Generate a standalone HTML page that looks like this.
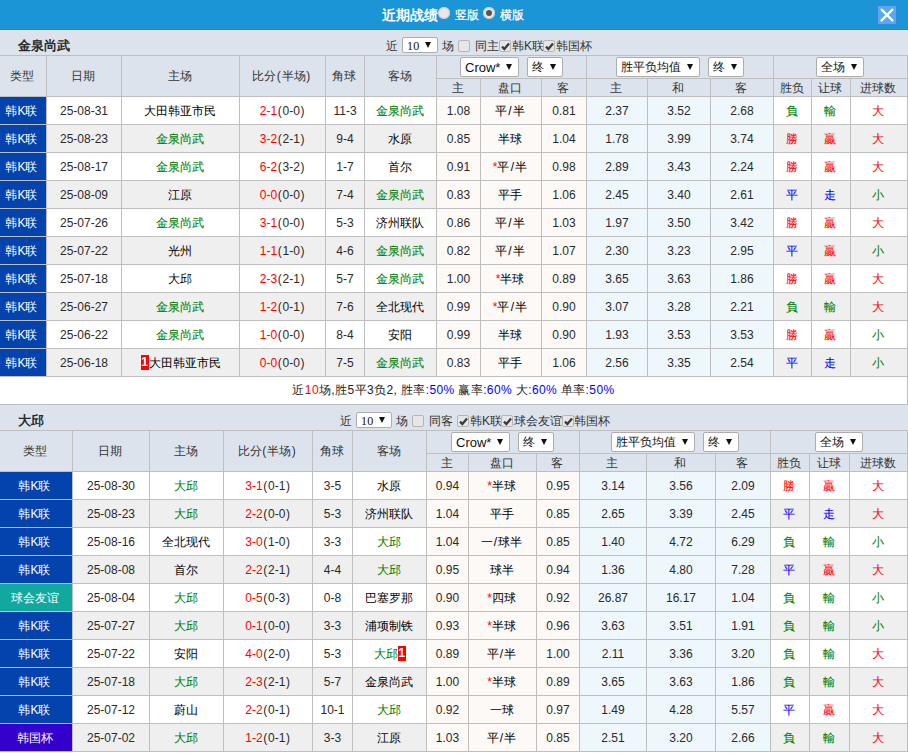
<!DOCTYPE html><html><head><meta charset="utf-8"><style>
*{margin:0;padding:0;box-sizing:content-box}
html,body{width:908px;height:753px;overflow:hidden;background:#dce3ec}
body{position:relative;font-family:"Liberation Sans",sans-serif;font-size:12px}
div{position:absolute}
.c{text-align:center;white-space:nowrap;overflow:hidden}
.t{white-space:nowrap}
.sel{background:#fff;border:1px solid #adadad;border-radius:2px;color:#111;white-space:nowrap}
.arr{position:absolute;top:6px;width:0;height:0;border-left:3.5px solid transparent;border-right:3.5px solid transparent;border-top:6px solid #111}
.cb{width:10px;height:10px;border:1px solid #b5b5b5;border-radius:2px;background:#e6e6e6}
.rad{width:12px;height:12px;border-radius:50%;background:#e8e8e8;box-shadow:inset 0 0 0 1px #c8c8c8}
.rad i{position:absolute;left:3px;top:3px;width:6px;height:6px;border-radius:50%;background:#555}
.p{padding:0 .7px}
.sl{padding:0 1.3px}
.bd{display:inline-block;width:8px;height:15px;line-height:15px;background:#f00;color:#fff;font-weight:bold;font-size:12px;text-align:center;vertical-align:1px}
</style></head><body><div style="left:0px;top:0px;width:908px;height:29px;background:#1b95d6"></div><div style="left:0px;top:29px;width:908px;height:1px;background:#0b8fd4"></div><div style="left:0px;top:30px;width:908px;height:1px;background:#e2e7ed"></div><div style="left:0px;top:31px;width:908px;height:722px;background:#dce3ec"></div><div class="t" style="left:382px;top:7px;font-size:14px;font-weight:bold;color:#fff;line-height:16px">近期战绩</div><div class="rad" style="left:438px;top:7px"></div><div class="t" style="left:455px;top:8px;color:#fff;line-height:14px;-webkit-text-stroke:0.25px #fff">竖版</div><div class="rad on" style="left:483px;top:7px"><i></i></div><div class="t" style="left:500px;top:8px;color:#fff;line-height:14px;-webkit-text-stroke:0.25px #fff">横版</div><div style="left:876px;top:4px;width:18px;height:18px;background:#5ba8ea;border:2px solid #2b8ae3"><svg width="18" height="18" viewBox="0 0 18 18" style="position:absolute;left:0;top:0"><path d="M3.6 3.6 L14.4 14.4 M14.4 3.6 L3.6 14.4" stroke="#fff" stroke-width="2.2" stroke-linecap="round"/></svg></div><div class="t" style="left:18px;top:38px;font-size:13px;font-weight:bold;color:#2a2a2a;line-height:15px">金泉尚武</div><div class="t" style="left:386px;top:39px;color:#333;line-height:14px">近</div><div class="sel" style="left:402px;top:37px;width:34px;height:14px;line-height:14px"><span style="position:absolute;left:4px;top:1px;font-size:12px"><span style="font-family:Liberation Serif,serif;letter-spacing:0.2px">10</span></span><span class="arr" style="left:22px;top:4px"></span></div><div class="t" style="left:442px;top:39px;color:#333;line-height:14px">场</div><div class="cb" style="left:458px;top:40px"></div><div class="t" style="left:475px;top:39px;color:#333;line-height:14px">同主</div><div class="cb" style="left:499px;top:40px"><svg width="11" height="11" viewBox="0 0 11 11" style="position:absolute;left:0;top:0"><path d="M2 5.6 L4.4 8 L9 2.6" stroke="#3a3a3a" stroke-width="2.3" fill="none"/></svg></div><div class="t" style="left:512px;top:39px;color:#333;line-height:14px">韩K联</div><div class="cb" style="left:543px;top:40px"><svg width="11" height="11" viewBox="0 0 11 11" style="position:absolute;left:0;top:0"><path d="M2 5.6 L4.4 8 L9 2.6" stroke="#3a3a3a" stroke-width="2.3" fill="none"/></svg></div><div class="t" style="left:556px;top:39px;color:#333;line-height:14px">韩国杯</div><div class="sel" style="left:460px;top:57px;width:57px;height:18px;line-height:18px"><span style="position:absolute;left:4px;top:1px;font-size:13px">Crow*</span><span class="arr" style="left:45px;top:6px"></span></div><div class="sel" style="left:527px;top:57px;width:34px;height:18px;line-height:18px"><span style="position:absolute;left:4px;top:0px;font-size:12px">终</span><span class="arr" style="left:22px;top:6px"></span></div><div class="sel" style="left:616px;top:57px;width:82px;height:18px;line-height:18px"><span style="position:absolute;left:4px;top:0px;font-size:12px">胜平负均值</span><span class="arr" style="left:70px;top:6px"></span></div><div class="sel" style="left:708px;top:57px;width:34px;height:18px;line-height:18px"><span style="position:absolute;left:4px;top:0px;font-size:12px">终</span><span class="arr" style="left:22px;top:6px"></span></div><div class="sel" style="left:816px;top:57px;width:46px;height:18px;line-height:18px"><span style="position:absolute;left:4px;top:0px;font-size:12px">全场</span><span class="arr" style="left:34px;top:6px"></span></div><div style="left:0px;top:97px;width:908px;height:27px;background:#ffffff"></div><div style="left:437px;top:97px;width:149px;height:27px;background:#fdf9f6"></div><div style="left:587px;top:97px;width:186px;height:27px;background:#eef7fc"></div><div style="left:0px;top:97px;width:46px;height:27px;background:#0443ae"></div><div style="left:0px;top:125px;width:908px;height:27px;background:#efefef"></div><div style="left:437px;top:125px;width:149px;height:27px;background:#fdf9f6"></div><div style="left:587px;top:125px;width:186px;height:27px;background:#eef7fc"></div><div style="left:0px;top:125px;width:46px;height:27px;background:#0443ae"></div><div style="left:0px;top:153px;width:908px;height:27px;background:#ffffff"></div><div style="left:437px;top:153px;width:149px;height:27px;background:#fdf9f6"></div><div style="left:587px;top:153px;width:186px;height:27px;background:#eef7fc"></div><div style="left:0px;top:153px;width:46px;height:27px;background:#0443ae"></div><div style="left:0px;top:181px;width:908px;height:27px;background:#efefef"></div><div style="left:437px;top:181px;width:149px;height:27px;background:#fdf9f6"></div><div style="left:587px;top:181px;width:186px;height:27px;background:#eef7fc"></div><div style="left:0px;top:181px;width:46px;height:27px;background:#0443ae"></div><div style="left:0px;top:209px;width:908px;height:27px;background:#ffffff"></div><div style="left:437px;top:209px;width:149px;height:27px;background:#fdf9f6"></div><div style="left:587px;top:209px;width:186px;height:27px;background:#eef7fc"></div><div style="left:0px;top:209px;width:46px;height:27px;background:#0443ae"></div><div style="left:0px;top:237px;width:908px;height:27px;background:#efefef"></div><div style="left:437px;top:237px;width:149px;height:27px;background:#fdf9f6"></div><div style="left:587px;top:237px;width:186px;height:27px;background:#eef7fc"></div><div style="left:0px;top:237px;width:46px;height:27px;background:#0443ae"></div><div style="left:0px;top:265px;width:908px;height:27px;background:#ffffff"></div><div style="left:437px;top:265px;width:149px;height:27px;background:#fdf9f6"></div><div style="left:587px;top:265px;width:186px;height:27px;background:#eef7fc"></div><div style="left:0px;top:265px;width:46px;height:27px;background:#0443ae"></div><div style="left:0px;top:293px;width:908px;height:27px;background:#efefef"></div><div style="left:437px;top:293px;width:149px;height:27px;background:#fdf9f6"></div><div style="left:587px;top:293px;width:186px;height:27px;background:#eef7fc"></div><div style="left:0px;top:293px;width:46px;height:27px;background:#0443ae"></div><div style="left:0px;top:321px;width:908px;height:27px;background:#ffffff"></div><div style="left:437px;top:321px;width:149px;height:27px;background:#fdf9f6"></div><div style="left:587px;top:321px;width:186px;height:27px;background:#eef7fc"></div><div style="left:0px;top:321px;width:46px;height:27px;background:#0443ae"></div><div style="left:0px;top:349px;width:908px;height:27px;background:#efefef"></div><div style="left:437px;top:349px;width:149px;height:27px;background:#fdf9f6"></div><div style="left:587px;top:349px;width:186px;height:27px;background:#eef7fc"></div><div style="left:0px;top:349px;width:46px;height:27px;background:#0443ae"></div><div style="left:0px;top:55px;width:907px;height:1px;background:#bebebe"></div><div style="left:436px;top:78px;width:471px;height:1px;background:#bebebe"></div><div style="left:0px;top:96px;width:907px;height:1px;background:#bebebe"></div><div style="left:0px;top:124px;width:907px;height:1px;background:#bebebe"></div><div style="left:0px;top:152px;width:907px;height:1px;background:#bebebe"></div><div style="left:0px;top:180px;width:907px;height:1px;background:#bebebe"></div><div style="left:0px;top:208px;width:907px;height:1px;background:#bebebe"></div><div style="left:0px;top:236px;width:907px;height:1px;background:#bebebe"></div><div style="left:0px;top:264px;width:907px;height:1px;background:#bebebe"></div><div style="left:0px;top:292px;width:907px;height:1px;background:#bebebe"></div><div style="left:0px;top:320px;width:907px;height:1px;background:#bebebe"></div><div style="left:0px;top:348px;width:907px;height:1px;background:#bebebe"></div><div style="left:0px;top:376px;width:907px;height:1px;background:#bebebe"></div><div style="left:46px;top:55px;width:1px;height:322px;background:#bebebe"></div><div style="left:121px;top:55px;width:1px;height:322px;background:#bebebe"></div><div style="left:239px;top:55px;width:1px;height:322px;background:#bebebe"></div><div style="left:325px;top:55px;width:1px;height:322px;background:#bebebe"></div><div style="left:364px;top:55px;width:1px;height:322px;background:#bebebe"></div><div style="left:436px;top:55px;width:1px;height:322px;background:#bebebe"></div><div style="left:480px;top:78px;width:1px;height:299px;background:#bebebe"></div><div style="left:541px;top:78px;width:1px;height:299px;background:#bebebe"></div><div style="left:586px;top:55px;width:1px;height:322px;background:#bebebe"></div><div style="left:647px;top:78px;width:1px;height:299px;background:#bebebe"></div><div style="left:710px;top:78px;width:1px;height:299px;background:#bebebe"></div><div style="left:773px;top:55px;width:1px;height:322px;background:#bebebe"></div><div style="left:811px;top:78px;width:1px;height:299px;background:#bebebe"></div><div style="left:850px;top:78px;width:1px;height:299px;background:#bebebe"></div><div style="left:907px;top:55px;width:1px;height:322px;background:#bebebe"></div><div class="c" style="left:-2px;top:56px;width:47px;height:40px;line-height:40px;color:#333">类型</div><div class="c" style="left:46px;top:56px;width:74px;height:40px;line-height:40px;color:#333">日期</div><div class="c" style="left:121px;top:56px;width:117px;height:40px;line-height:40px;color:#333">主场</div><div class="c" style="left:239px;top:56px;width:85px;height:40px;line-height:40px;color:#333">比分<span class="p">(</span>半场<span class="p">)</span></div><div class="c" style="left:325px;top:56px;width:38px;height:40px;line-height:40px;color:#333">角球</div><div class="c" style="left:364px;top:56px;width:71px;height:40px;line-height:40px;color:#333">客场</div><div class="c" style="left:436px;top:80px;width:43px;height:17px;line-height:17px;color:#333">主</div><div class="c" style="left:480px;top:80px;width:60px;height:17px;line-height:17px;color:#333">盘口</div><div class="c" style="left:541px;top:80px;width:44px;height:17px;line-height:17px;color:#333">客</div><div class="c" style="left:586px;top:80px;width:60px;height:17px;line-height:17px;color:#333">主</div><div class="c" style="left:647px;top:80px;width:62px;height:17px;line-height:17px;color:#333">和</div><div class="c" style="left:710px;top:80px;width:62px;height:17px;line-height:17px;color:#333">客</div><div class="c" style="left:773px;top:80px;width:37px;height:17px;line-height:17px;color:#333">胜负</div><div class="c" style="left:811px;top:80px;width:38px;height:17px;line-height:17px;color:#333">让球</div><div class="c" style="left:850px;top:80px;width:56px;height:17px;line-height:17px;color:#333">进球数</div><div class="c" style="left:-2px;top:98px;width:47px;height:27px;line-height:27px;color:#fff">韩K联</div><div class="c" style="left:47px;top:98px;width:74px;height:27px;line-height:27px;color:#2a2a2a">25-08-31</div><div class="c" style="left:121px;top:98px;width:117px;height:27px;line-height:27px;color:#000">大田韩亚市民</div><div class="c" style="left:240px;top:98px;width:85px;height:27px;line-height:27px;color:#2a2a2a"><span style="color:#ff0000">2-1</span><span class="p">(</span>0-0<span class="p">)</span></div><div class="c" style="left:326px;top:98px;width:38px;height:27px;line-height:27px;color:#2a2a2a">11-3</div><div class="c" style="left:364px;top:98px;width:71px;height:27px;line-height:27px;color:#008000;-webkit-text-stroke:0.08px">金泉尚武</div><div class="c" style="left:437px;top:98px;width:43px;height:27px;line-height:27px;color:#2a2a2a">1.08</div><div class="c" style="left:480px;top:98px;width:60px;height:27px;line-height:27px;color:#000">平<span class="sl">/</span>半</div><div class="c" style="left:542px;top:98px;width:44px;height:27px;line-height:27px;color:#2a2a2a">0.81</div><div class="c" style="left:587px;top:98px;width:60px;height:27px;line-height:27px;color:#2a2a2a">2.37</div><div class="c" style="left:648px;top:98px;width:62px;height:27px;line-height:27px;color:#2a2a2a">3.52</div><div class="c" style="left:711px;top:98px;width:62px;height:27px;line-height:27px;color:#2a2a2a">2.68</div><div class="c" style="left:773px;top:98px;width:37px;height:27px;line-height:27px;color:#008000;-webkit-text-stroke:0.08px">負</div><div class="c" style="left:811px;top:98px;width:38px;height:27px;line-height:27px;color:#008000;-webkit-text-stroke:0.08px">輸</div><div class="c" style="left:850px;top:98px;width:56px;height:27px;line-height:27px;color:#ff0000;-webkit-text-stroke:0.08px">大</div><div class="c" style="left:-2px;top:126px;width:47px;height:27px;line-height:27px;color:#fff">韩K联</div><div class="c" style="left:47px;top:126px;width:74px;height:27px;line-height:27px;color:#2a2a2a">25-08-23</div><div class="c" style="left:121px;top:126px;width:117px;height:27px;line-height:27px;color:#008000;-webkit-text-stroke:0.08px">金泉尚武</div><div class="c" style="left:240px;top:126px;width:85px;height:27px;line-height:27px;color:#2a2a2a"><span style="color:#ff0000">3-2</span><span class="p">(</span>2-1<span class="p">)</span></div><div class="c" style="left:326px;top:126px;width:38px;height:27px;line-height:27px;color:#2a2a2a">9-4</div><div class="c" style="left:364px;top:126px;width:71px;height:27px;line-height:27px;color:#000">水原</div><div class="c" style="left:437px;top:126px;width:43px;height:27px;line-height:27px;color:#2a2a2a">0.85</div><div class="c" style="left:480px;top:126px;width:60px;height:27px;line-height:27px;color:#000">半球</div><div class="c" style="left:542px;top:126px;width:44px;height:27px;line-height:27px;color:#2a2a2a">1.04</div><div class="c" style="left:587px;top:126px;width:60px;height:27px;line-height:27px;color:#2a2a2a">1.78</div><div class="c" style="left:648px;top:126px;width:62px;height:27px;line-height:27px;color:#2a2a2a">3.99</div><div class="c" style="left:711px;top:126px;width:62px;height:27px;line-height:27px;color:#2a2a2a">3.74</div><div class="c" style="left:773px;top:126px;width:37px;height:27px;line-height:27px;color:#ff0000;-webkit-text-stroke:0.08px">勝</div><div class="c" style="left:811px;top:126px;width:38px;height:27px;line-height:27px;color:#ff0000;-webkit-text-stroke:0.08px">贏</div><div class="c" style="left:850px;top:126px;width:56px;height:27px;line-height:27px;color:#ff0000;-webkit-text-stroke:0.08px">大</div><div class="c" style="left:-2px;top:154px;width:47px;height:27px;line-height:27px;color:#fff">韩K联</div><div class="c" style="left:47px;top:154px;width:74px;height:27px;line-height:27px;color:#2a2a2a">25-08-17</div><div class="c" style="left:121px;top:154px;width:117px;height:27px;line-height:27px;color:#008000;-webkit-text-stroke:0.08px">金泉尚武</div><div class="c" style="left:240px;top:154px;width:85px;height:27px;line-height:27px;color:#2a2a2a"><span style="color:#ff0000">6-2</span><span class="p">(</span>3-2<span class="p">)</span></div><div class="c" style="left:326px;top:154px;width:38px;height:27px;line-height:27px;color:#2a2a2a">1-7</div><div class="c" style="left:364px;top:154px;width:71px;height:27px;line-height:27px;color:#000">首尔</div><div class="c" style="left:437px;top:154px;width:43px;height:27px;line-height:27px;color:#2a2a2a">0.91</div><div class="c" style="left:480px;top:154px;width:60px;height:27px;line-height:27px;color:#000"><span style="color:#ff0000">*</span>平<span class="sl">/</span>半</div><div class="c" style="left:542px;top:154px;width:44px;height:27px;line-height:27px;color:#2a2a2a">0.98</div><div class="c" style="left:587px;top:154px;width:60px;height:27px;line-height:27px;color:#2a2a2a">2.89</div><div class="c" style="left:648px;top:154px;width:62px;height:27px;line-height:27px;color:#2a2a2a">3.43</div><div class="c" style="left:711px;top:154px;width:62px;height:27px;line-height:27px;color:#2a2a2a">2.24</div><div class="c" style="left:773px;top:154px;width:37px;height:27px;line-height:27px;color:#ff0000;-webkit-text-stroke:0.08px">勝</div><div class="c" style="left:811px;top:154px;width:38px;height:27px;line-height:27px;color:#ff0000;-webkit-text-stroke:0.08px">贏</div><div class="c" style="left:850px;top:154px;width:56px;height:27px;line-height:27px;color:#ff0000;-webkit-text-stroke:0.08px">大</div><div class="c" style="left:-2px;top:182px;width:47px;height:27px;line-height:27px;color:#fff">韩K联</div><div class="c" style="left:47px;top:182px;width:74px;height:27px;line-height:27px;color:#2a2a2a">25-08-09</div><div class="c" style="left:121px;top:182px;width:117px;height:27px;line-height:27px;color:#000">江原</div><div class="c" style="left:240px;top:182px;width:85px;height:27px;line-height:27px;color:#2a2a2a"><span style="color:#ff0000">0-0</span><span class="p">(</span>0-0<span class="p">)</span></div><div class="c" style="left:326px;top:182px;width:38px;height:27px;line-height:27px;color:#2a2a2a">7-4</div><div class="c" style="left:364px;top:182px;width:71px;height:27px;line-height:27px;color:#008000;-webkit-text-stroke:0.08px">金泉尚武</div><div class="c" style="left:437px;top:182px;width:43px;height:27px;line-height:27px;color:#2a2a2a">0.83</div><div class="c" style="left:480px;top:182px;width:60px;height:27px;line-height:27px;color:#000">平手</div><div class="c" style="left:542px;top:182px;width:44px;height:27px;line-height:27px;color:#2a2a2a">1.06</div><div class="c" style="left:587px;top:182px;width:60px;height:27px;line-height:27px;color:#2a2a2a">2.45</div><div class="c" style="left:648px;top:182px;width:62px;height:27px;line-height:27px;color:#2a2a2a">3.40</div><div class="c" style="left:711px;top:182px;width:62px;height:27px;line-height:27px;color:#2a2a2a">2.61</div><div class="c" style="left:773px;top:182px;width:37px;height:27px;line-height:27px;color:#0000ff;-webkit-text-stroke:0.08px">平</div><div class="c" style="left:811px;top:182px;width:38px;height:27px;line-height:27px;color:#0000ff;-webkit-text-stroke:0.08px">走</div><div class="c" style="left:850px;top:182px;width:56px;height:27px;line-height:27px;color:#008000;-webkit-text-stroke:0.08px">小</div><div class="c" style="left:-2px;top:210px;width:47px;height:27px;line-height:27px;color:#fff">韩K联</div><div class="c" style="left:47px;top:210px;width:74px;height:27px;line-height:27px;color:#2a2a2a">25-07-26</div><div class="c" style="left:121px;top:210px;width:117px;height:27px;line-height:27px;color:#008000;-webkit-text-stroke:0.08px">金泉尚武</div><div class="c" style="left:240px;top:210px;width:85px;height:27px;line-height:27px;color:#2a2a2a"><span style="color:#ff0000">3-1</span><span class="p">(</span>0-0<span class="p">)</span></div><div class="c" style="left:326px;top:210px;width:38px;height:27px;line-height:27px;color:#2a2a2a">5-3</div><div class="c" style="left:364px;top:210px;width:71px;height:27px;line-height:27px;color:#000">济州联队</div><div class="c" style="left:437px;top:210px;width:43px;height:27px;line-height:27px;color:#2a2a2a">0.86</div><div class="c" style="left:480px;top:210px;width:60px;height:27px;line-height:27px;color:#000">平<span class="sl">/</span>半</div><div class="c" style="left:542px;top:210px;width:44px;height:27px;line-height:27px;color:#2a2a2a">1.03</div><div class="c" style="left:587px;top:210px;width:60px;height:27px;line-height:27px;color:#2a2a2a">1.97</div><div class="c" style="left:648px;top:210px;width:62px;height:27px;line-height:27px;color:#2a2a2a">3.50</div><div class="c" style="left:711px;top:210px;width:62px;height:27px;line-height:27px;color:#2a2a2a">3.42</div><div class="c" style="left:773px;top:210px;width:37px;height:27px;line-height:27px;color:#ff0000;-webkit-text-stroke:0.08px">勝</div><div class="c" style="left:811px;top:210px;width:38px;height:27px;line-height:27px;color:#ff0000;-webkit-text-stroke:0.08px">贏</div><div class="c" style="left:850px;top:210px;width:56px;height:27px;line-height:27px;color:#ff0000;-webkit-text-stroke:0.08px">大</div><div class="c" style="left:-2px;top:238px;width:47px;height:27px;line-height:27px;color:#fff">韩K联</div><div class="c" style="left:47px;top:238px;width:74px;height:27px;line-height:27px;color:#2a2a2a">25-07-22</div><div class="c" style="left:121px;top:238px;width:117px;height:27px;line-height:27px;color:#000">光州</div><div class="c" style="left:240px;top:238px;width:85px;height:27px;line-height:27px;color:#2a2a2a"><span style="color:#ff0000">1-1</span><span class="p">(</span>1-0<span class="p">)</span></div><div class="c" style="left:326px;top:238px;width:38px;height:27px;line-height:27px;color:#2a2a2a">4-6</div><div class="c" style="left:364px;top:238px;width:71px;height:27px;line-height:27px;color:#008000;-webkit-text-stroke:0.08px">金泉尚武</div><div class="c" style="left:437px;top:238px;width:43px;height:27px;line-height:27px;color:#2a2a2a">0.82</div><div class="c" style="left:480px;top:238px;width:60px;height:27px;line-height:27px;color:#000">平<span class="sl">/</span>半</div><div class="c" style="left:542px;top:238px;width:44px;height:27px;line-height:27px;color:#2a2a2a">1.07</div><div class="c" style="left:587px;top:238px;width:60px;height:27px;line-height:27px;color:#2a2a2a">2.30</div><div class="c" style="left:648px;top:238px;width:62px;height:27px;line-height:27px;color:#2a2a2a">3.23</div><div class="c" style="left:711px;top:238px;width:62px;height:27px;line-height:27px;color:#2a2a2a">2.95</div><div class="c" style="left:773px;top:238px;width:37px;height:27px;line-height:27px;color:#0000ff;-webkit-text-stroke:0.08px">平</div><div class="c" style="left:811px;top:238px;width:38px;height:27px;line-height:27px;color:#ff0000;-webkit-text-stroke:0.08px">贏</div><div class="c" style="left:850px;top:238px;width:56px;height:27px;line-height:27px;color:#008000;-webkit-text-stroke:0.08px">小</div><div class="c" style="left:-2px;top:266px;width:47px;height:27px;line-height:27px;color:#fff">韩K联</div><div class="c" style="left:47px;top:266px;width:74px;height:27px;line-height:27px;color:#2a2a2a">25-07-18</div><div class="c" style="left:121px;top:266px;width:117px;height:27px;line-height:27px;color:#000">大邱</div><div class="c" style="left:240px;top:266px;width:85px;height:27px;line-height:27px;color:#2a2a2a"><span style="color:#ff0000">2-3</span><span class="p">(</span>2-1<span class="p">)</span></div><div class="c" style="left:326px;top:266px;width:38px;height:27px;line-height:27px;color:#2a2a2a">5-7</div><div class="c" style="left:364px;top:266px;width:71px;height:27px;line-height:27px;color:#008000;-webkit-text-stroke:0.08px">金泉尚武</div><div class="c" style="left:437px;top:266px;width:43px;height:27px;line-height:27px;color:#2a2a2a">1.00</div><div class="c" style="left:480px;top:266px;width:60px;height:27px;line-height:27px;color:#000"><span style="color:#ff0000">*</span>半球</div><div class="c" style="left:542px;top:266px;width:44px;height:27px;line-height:27px;color:#2a2a2a">0.89</div><div class="c" style="left:587px;top:266px;width:60px;height:27px;line-height:27px;color:#2a2a2a">3.65</div><div class="c" style="left:648px;top:266px;width:62px;height:27px;line-height:27px;color:#2a2a2a">3.63</div><div class="c" style="left:711px;top:266px;width:62px;height:27px;line-height:27px;color:#2a2a2a">1.86</div><div class="c" style="left:773px;top:266px;width:37px;height:27px;line-height:27px;color:#ff0000;-webkit-text-stroke:0.08px">勝</div><div class="c" style="left:811px;top:266px;width:38px;height:27px;line-height:27px;color:#ff0000;-webkit-text-stroke:0.08px">贏</div><div class="c" style="left:850px;top:266px;width:56px;height:27px;line-height:27px;color:#ff0000;-webkit-text-stroke:0.08px">大</div><div class="c" style="left:-2px;top:294px;width:47px;height:27px;line-height:27px;color:#fff">韩K联</div><div class="c" style="left:47px;top:294px;width:74px;height:27px;line-height:27px;color:#2a2a2a">25-06-27</div><div class="c" style="left:121px;top:294px;width:117px;height:27px;line-height:27px;color:#008000;-webkit-text-stroke:0.08px">金泉尚武</div><div class="c" style="left:240px;top:294px;width:85px;height:27px;line-height:27px;color:#2a2a2a"><span style="color:#ff0000">1-2</span><span class="p">(</span>0-1<span class="p">)</span></div><div class="c" style="left:326px;top:294px;width:38px;height:27px;line-height:27px;color:#2a2a2a">7-6</div><div class="c" style="left:364px;top:294px;width:71px;height:27px;line-height:27px;color:#000">全北现代</div><div class="c" style="left:437px;top:294px;width:43px;height:27px;line-height:27px;color:#2a2a2a">0.99</div><div class="c" style="left:480px;top:294px;width:60px;height:27px;line-height:27px;color:#000"><span style="color:#ff0000">*</span>平<span class="sl">/</span>半</div><div class="c" style="left:542px;top:294px;width:44px;height:27px;line-height:27px;color:#2a2a2a">0.90</div><div class="c" style="left:587px;top:294px;width:60px;height:27px;line-height:27px;color:#2a2a2a">3.07</div><div class="c" style="left:648px;top:294px;width:62px;height:27px;line-height:27px;color:#2a2a2a">3.28</div><div class="c" style="left:711px;top:294px;width:62px;height:27px;line-height:27px;color:#2a2a2a">2.21</div><div class="c" style="left:773px;top:294px;width:37px;height:27px;line-height:27px;color:#008000;-webkit-text-stroke:0.08px">負</div><div class="c" style="left:811px;top:294px;width:38px;height:27px;line-height:27px;color:#008000;-webkit-text-stroke:0.08px">輸</div><div class="c" style="left:850px;top:294px;width:56px;height:27px;line-height:27px;color:#ff0000;-webkit-text-stroke:0.08px">大</div><div class="c" style="left:-2px;top:322px;width:47px;height:27px;line-height:27px;color:#fff">韩K联</div><div class="c" style="left:47px;top:322px;width:74px;height:27px;line-height:27px;color:#2a2a2a">25-06-22</div><div class="c" style="left:121px;top:322px;width:117px;height:27px;line-height:27px;color:#008000;-webkit-text-stroke:0.08px">金泉尚武</div><div class="c" style="left:240px;top:322px;width:85px;height:27px;line-height:27px;color:#2a2a2a"><span style="color:#ff0000">1-0</span><span class="p">(</span>0-0<span class="p">)</span></div><div class="c" style="left:326px;top:322px;width:38px;height:27px;line-height:27px;color:#2a2a2a">8-4</div><div class="c" style="left:364px;top:322px;width:71px;height:27px;line-height:27px;color:#000">安阳</div><div class="c" style="left:437px;top:322px;width:43px;height:27px;line-height:27px;color:#2a2a2a">0.99</div><div class="c" style="left:480px;top:322px;width:60px;height:27px;line-height:27px;color:#000">半球</div><div class="c" style="left:542px;top:322px;width:44px;height:27px;line-height:27px;color:#2a2a2a">0.90</div><div class="c" style="left:587px;top:322px;width:60px;height:27px;line-height:27px;color:#2a2a2a">1.93</div><div class="c" style="left:648px;top:322px;width:62px;height:27px;line-height:27px;color:#2a2a2a">3.53</div><div class="c" style="left:711px;top:322px;width:62px;height:27px;line-height:27px;color:#2a2a2a">3.53</div><div class="c" style="left:773px;top:322px;width:37px;height:27px;line-height:27px;color:#ff0000;-webkit-text-stroke:0.08px">勝</div><div class="c" style="left:811px;top:322px;width:38px;height:27px;line-height:27px;color:#ff0000;-webkit-text-stroke:0.08px">贏</div><div class="c" style="left:850px;top:322px;width:56px;height:27px;line-height:27px;color:#008000;-webkit-text-stroke:0.08px">小</div><div class="c" style="left:-2px;top:350px;width:47px;height:27px;line-height:27px;color:#fff">韩K联</div><div class="c" style="left:47px;top:350px;width:74px;height:27px;line-height:27px;color:#2a2a2a">25-06-18</div><div class="c" style="left:122px;top:350px;width:117px;height:27px;line-height:27px;color:#000"><b class="bd">1</b>大田韩亚市民</div><div class="c" style="left:240px;top:350px;width:85px;height:27px;line-height:27px;color:#2a2a2a"><span style="color:#ff0000">0-0</span><span class="p">(</span>0-0<span class="p">)</span></div><div class="c" style="left:326px;top:350px;width:38px;height:27px;line-height:27px;color:#2a2a2a">7-5</div><div class="c" style="left:364px;top:350px;width:71px;height:27px;line-height:27px;color:#008000;-webkit-text-stroke:0.08px">金泉尚武</div><div class="c" style="left:437px;top:350px;width:43px;height:27px;line-height:27px;color:#2a2a2a">0.83</div><div class="c" style="left:480px;top:350px;width:60px;height:27px;line-height:27px;color:#000">平手</div><div class="c" style="left:542px;top:350px;width:44px;height:27px;line-height:27px;color:#2a2a2a">1.06</div><div class="c" style="left:587px;top:350px;width:60px;height:27px;line-height:27px;color:#2a2a2a">2.56</div><div class="c" style="left:648px;top:350px;width:62px;height:27px;line-height:27px;color:#2a2a2a">3.35</div><div class="c" style="left:711px;top:350px;width:62px;height:27px;line-height:27px;color:#2a2a2a">2.54</div><div class="c" style="left:773px;top:350px;width:37px;height:27px;line-height:27px;color:#0000ff;-webkit-text-stroke:0.08px">平</div><div class="c" style="left:811px;top:350px;width:38px;height:27px;line-height:27px;color:#0000ff;-webkit-text-stroke:0.08px">走</div><div class="c" style="left:850px;top:350px;width:56px;height:27px;line-height:27px;color:#008000;-webkit-text-stroke:0.08px">小</div><div style="left:0px;top:377px;width:907px;height:27px;background:#fff"></div><div style="left:0px;top:404px;width:907px;height:1px;background:#bebebe"></div><div style="left:907px;top:376px;width:1px;height:29px;background:#bebebe"></div><div class="c" style="left:0px;top:377px;width:907px;height:27px;line-height:27px;color:#222;letter-spacing:0.39px">近<span style="color:#ff0000">10</span>场,胜5平3负2, 胜率:<span style="color:#0000ff">50%</span> 赢率:<span style="color:#0000ff">60%</span> 大:<span style="color:#0000ff">60%</span> 单率:<span style="color:#0000ff">50%</span></div><div class="t" style="left:18px;top:413px;font-size:13px;font-weight:bold;color:#2a2a2a;line-height:15px">大邱</div><div class="t" style="left:340px;top:414px;color:#333;line-height:14px">近</div><div class="sel" style="left:356px;top:412px;width:34px;height:14px;line-height:14px"><span style="position:absolute;left:4px;top:1px;font-size:12px"><span style="font-family:Liberation Serif,serif;letter-spacing:0.2px">10</span></span><span class="arr" style="left:22px;top:4px"></span></div><div class="t" style="left:396px;top:414px;color:#333;line-height:14px">场</div><div class="cb" style="left:412px;top:415px"></div><div class="t" style="left:429px;top:414px;color:#333;line-height:14px">同客</div><div class="cb" style="left:457px;top:415px"><svg width="11" height="11" viewBox="0 0 11 11" style="position:absolute;left:0;top:0"><path d="M2 5.6 L4.4 8 L9 2.6" stroke="#3a3a3a" stroke-width="2.3" fill="none"/></svg></div><div class="t" style="left:470px;top:414px;color:#333;line-height:14px">韩K联</div><div class="cb" style="left:501px;top:415px"><svg width="11" height="11" viewBox="0 0 11 11" style="position:absolute;left:0;top:0"><path d="M2 5.6 L4.4 8 L9 2.6" stroke="#3a3a3a" stroke-width="2.3" fill="none"/></svg></div><div class="t" style="left:514px;top:414px;color:#333;line-height:14px">球会友谊</div><div class="cb" style="left:562px;top:415px"><svg width="11" height="11" viewBox="0 0 11 11" style="position:absolute;left:0;top:0"><path d="M2 5.6 L4.4 8 L9 2.6" stroke="#3a3a3a" stroke-width="2.3" fill="none"/></svg></div><div class="t" style="left:574px;top:414px;color:#333;line-height:14px">韩国杯</div><div class="sel" style="left:451px;top:432px;width:57px;height:18px;line-height:18px"><span style="position:absolute;left:4px;top:1px;font-size:13px">Crow*</span><span class="arr" style="left:45px;top:6px"></span></div><div class="sel" style="left:518px;top:432px;width:34px;height:18px;line-height:18px"><span style="position:absolute;left:4px;top:0px;font-size:12px">终</span><span class="arr" style="left:22px;top:6px"></span></div><div class="sel" style="left:611px;top:432px;width:82px;height:18px;line-height:18px"><span style="position:absolute;left:4px;top:0px;font-size:12px">胜平负均值</span><span class="arr" style="left:70px;top:6px"></span></div><div class="sel" style="left:703px;top:432px;width:34px;height:18px;line-height:18px"><span style="position:absolute;left:4px;top:0px;font-size:12px">终</span><span class="arr" style="left:22px;top:6px"></span></div><div class="sel" style="left:815px;top:432px;width:46px;height:18px;line-height:18px"><span style="position:absolute;left:4px;top:0px;font-size:12px">全场</span><span class="arr" style="left:34px;top:6px"></span></div><div style="left:0px;top:472px;width:908px;height:27px;background:#ffffff"></div><div style="left:427px;top:472px;width:152px;height:27px;background:#fdf9f6"></div><div style="left:580px;top:472px;width:190px;height:27px;background:#eef7fc"></div><div style="left:0px;top:472px;width:72px;height:27px;background:#0443ae"></div><div style="left:0px;top:500px;width:908px;height:27px;background:#efefef"></div><div style="left:427px;top:500px;width:152px;height:27px;background:#fdf9f6"></div><div style="left:580px;top:500px;width:190px;height:27px;background:#eef7fc"></div><div style="left:0px;top:500px;width:72px;height:27px;background:#0443ae"></div><div style="left:0px;top:528px;width:908px;height:27px;background:#ffffff"></div><div style="left:427px;top:528px;width:152px;height:27px;background:#fdf9f6"></div><div style="left:580px;top:528px;width:190px;height:27px;background:#eef7fc"></div><div style="left:0px;top:528px;width:72px;height:27px;background:#0443ae"></div><div style="left:0px;top:556px;width:908px;height:27px;background:#efefef"></div><div style="left:427px;top:556px;width:152px;height:27px;background:#fdf9f6"></div><div style="left:580px;top:556px;width:190px;height:27px;background:#eef7fc"></div><div style="left:0px;top:556px;width:72px;height:27px;background:#0443ae"></div><div style="left:0px;top:584px;width:908px;height:27px;background:#ffffff"></div><div style="left:427px;top:584px;width:152px;height:27px;background:#fdf9f6"></div><div style="left:580px;top:584px;width:190px;height:27px;background:#eef7fc"></div><div style="left:0px;top:584px;width:72px;height:27px;background:#11a8a0"></div><div style="left:0px;top:612px;width:908px;height:27px;background:#efefef"></div><div style="left:427px;top:612px;width:152px;height:27px;background:#fdf9f6"></div><div style="left:580px;top:612px;width:190px;height:27px;background:#eef7fc"></div><div style="left:0px;top:612px;width:72px;height:27px;background:#0443ae"></div><div style="left:0px;top:640px;width:908px;height:27px;background:#ffffff"></div><div style="left:427px;top:640px;width:152px;height:27px;background:#fdf9f6"></div><div style="left:580px;top:640px;width:190px;height:27px;background:#eef7fc"></div><div style="left:0px;top:640px;width:72px;height:27px;background:#0443ae"></div><div style="left:0px;top:668px;width:908px;height:27px;background:#efefef"></div><div style="left:427px;top:668px;width:152px;height:27px;background:#fdf9f6"></div><div style="left:580px;top:668px;width:190px;height:27px;background:#eef7fc"></div><div style="left:0px;top:668px;width:72px;height:27px;background:#0443ae"></div><div style="left:0px;top:696px;width:908px;height:27px;background:#ffffff"></div><div style="left:427px;top:696px;width:152px;height:27px;background:#fdf9f6"></div><div style="left:580px;top:696px;width:190px;height:27px;background:#eef7fc"></div><div style="left:0px;top:696px;width:72px;height:27px;background:#0443ae"></div><div style="left:0px;top:724px;width:908px;height:27px;background:#efefef"></div><div style="left:427px;top:724px;width:152px;height:27px;background:#fdf9f6"></div><div style="left:580px;top:724px;width:190px;height:27px;background:#eef7fc"></div><div style="left:0px;top:724px;width:72px;height:27px;background:#3300cc"></div><div style="left:0px;top:430px;width:907px;height:1px;background:#bebebe"></div><div style="left:426px;top:453px;width:481px;height:1px;background:#bebebe"></div><div style="left:0px;top:471px;width:907px;height:1px;background:#bebebe"></div><div style="left:0px;top:499px;width:907px;height:1px;background:#bebebe"></div><div style="left:0px;top:527px;width:907px;height:1px;background:#bebebe"></div><div style="left:0px;top:555px;width:907px;height:1px;background:#bebebe"></div><div style="left:0px;top:583px;width:907px;height:1px;background:#bebebe"></div><div style="left:0px;top:611px;width:907px;height:1px;background:#bebebe"></div><div style="left:0px;top:639px;width:907px;height:1px;background:#bebebe"></div><div style="left:0px;top:667px;width:907px;height:1px;background:#bebebe"></div><div style="left:0px;top:695px;width:907px;height:1px;background:#bebebe"></div><div style="left:0px;top:723px;width:907px;height:1px;background:#bebebe"></div><div style="left:0px;top:751px;width:907px;height:1px;background:#bebebe"></div><div style="left:72px;top:430px;width:1px;height:322px;background:#bebebe"></div><div style="left:149px;top:430px;width:1px;height:322px;background:#bebebe"></div><div style="left:223px;top:430px;width:1px;height:322px;background:#bebebe"></div><div style="left:312px;top:430px;width:1px;height:322px;background:#bebebe"></div><div style="left:352px;top:430px;width:1px;height:322px;background:#bebebe"></div><div style="left:426px;top:430px;width:1px;height:322px;background:#bebebe"></div><div style="left:468px;top:453px;width:1px;height:299px;background:#bebebe"></div><div style="left:536px;top:453px;width:1px;height:299px;background:#bebebe"></div><div style="left:579px;top:430px;width:1px;height:322px;background:#bebebe"></div><div style="left:646px;top:453px;width:1px;height:299px;background:#bebebe"></div><div style="left:715px;top:453px;width:1px;height:299px;background:#bebebe"></div><div style="left:770px;top:430px;width:1px;height:322px;background:#bebebe"></div><div style="left:809px;top:453px;width:1px;height:299px;background:#bebebe"></div><div style="left:849px;top:453px;width:1px;height:299px;background:#bebebe"></div><div style="left:907px;top:430px;width:1px;height:322px;background:#bebebe"></div><div class="c" style="left:-2px;top:431px;width:73px;height:40px;line-height:40px;color:#333">类型</div><div class="c" style="left:72px;top:431px;width:76px;height:40px;line-height:40px;color:#333">日期</div><div class="c" style="left:149px;top:431px;width:73px;height:40px;line-height:40px;color:#333">主场</div><div class="c" style="left:223px;top:431px;width:88px;height:40px;line-height:40px;color:#333">比分<span class="p">(</span>半场<span class="p">)</span></div><div class="c" style="left:312px;top:431px;width:39px;height:40px;line-height:40px;color:#333">角球</div><div class="c" style="left:352px;top:431px;width:73px;height:40px;line-height:40px;color:#333">客场</div><div class="c" style="left:426px;top:455px;width:41px;height:17px;line-height:17px;color:#333">主</div><div class="c" style="left:468px;top:455px;width:67px;height:17px;line-height:17px;color:#333">盘口</div><div class="c" style="left:536px;top:455px;width:42px;height:17px;line-height:17px;color:#333">客</div><div class="c" style="left:579px;top:455px;width:66px;height:17px;line-height:17px;color:#333">主</div><div class="c" style="left:646px;top:455px;width:68px;height:17px;line-height:17px;color:#333">和</div><div class="c" style="left:715px;top:455px;width:54px;height:17px;line-height:17px;color:#333">客</div><div class="c" style="left:770px;top:455px;width:38px;height:17px;line-height:17px;color:#333">胜负</div><div class="c" style="left:809px;top:455px;width:39px;height:17px;line-height:17px;color:#333">让球</div><div class="c" style="left:849px;top:455px;width:57px;height:17px;line-height:17px;color:#333">进球数</div><div class="c" style="left:-2px;top:473px;width:73px;height:27px;line-height:27px;color:#fff">韩K联</div><div class="c" style="left:73px;top:473px;width:76px;height:27px;line-height:27px;color:#2a2a2a">25-08-30</div><div class="c" style="left:149px;top:473px;width:73px;height:27px;line-height:27px;color:#008000;-webkit-text-stroke:0.08px">大邱</div><div class="c" style="left:224px;top:473px;width:88px;height:27px;line-height:27px;color:#2a2a2a"><span style="color:#ff0000">3-1</span><span class="p">(</span>0-1<span class="p">)</span></div><div class="c" style="left:313px;top:473px;width:39px;height:27px;line-height:27px;color:#2a2a2a">3-5</div><div class="c" style="left:352px;top:473px;width:73px;height:27px;line-height:27px;color:#000">水原</div><div class="c" style="left:427px;top:473px;width:41px;height:27px;line-height:27px;color:#2a2a2a">0.94</div><div class="c" style="left:468px;top:473px;width:67px;height:27px;line-height:27px;color:#000"><span style="color:#ff0000">*</span>半球</div><div class="c" style="left:537px;top:473px;width:42px;height:27px;line-height:27px;color:#2a2a2a">0.95</div><div class="c" style="left:580px;top:473px;width:66px;height:27px;line-height:27px;color:#2a2a2a">3.14</div><div class="c" style="left:647px;top:473px;width:68px;height:27px;line-height:27px;color:#2a2a2a">3.56</div><div class="c" style="left:716px;top:473px;width:54px;height:27px;line-height:27px;color:#2a2a2a">2.09</div><div class="c" style="left:770px;top:473px;width:38px;height:27px;line-height:27px;color:#ff0000;-webkit-text-stroke:0.08px">勝</div><div class="c" style="left:809px;top:473px;width:39px;height:27px;line-height:27px;color:#ff0000;-webkit-text-stroke:0.08px">贏</div><div class="c" style="left:849px;top:473px;width:57px;height:27px;line-height:27px;color:#ff0000;-webkit-text-stroke:0.08px">大</div><div class="c" style="left:-2px;top:501px;width:73px;height:27px;line-height:27px;color:#fff">韩K联</div><div class="c" style="left:73px;top:501px;width:76px;height:27px;line-height:27px;color:#2a2a2a">25-08-23</div><div class="c" style="left:149px;top:501px;width:73px;height:27px;line-height:27px;color:#008000;-webkit-text-stroke:0.08px">大邱</div><div class="c" style="left:224px;top:501px;width:88px;height:27px;line-height:27px;color:#2a2a2a"><span style="color:#ff0000">2-2</span><span class="p">(</span>0-0<span class="p">)</span></div><div class="c" style="left:313px;top:501px;width:39px;height:27px;line-height:27px;color:#2a2a2a">5-3</div><div class="c" style="left:352px;top:501px;width:73px;height:27px;line-height:27px;color:#000">济州联队</div><div class="c" style="left:427px;top:501px;width:41px;height:27px;line-height:27px;color:#2a2a2a">1.04</div><div class="c" style="left:468px;top:501px;width:67px;height:27px;line-height:27px;color:#000">平手</div><div class="c" style="left:537px;top:501px;width:42px;height:27px;line-height:27px;color:#2a2a2a">0.85</div><div class="c" style="left:580px;top:501px;width:66px;height:27px;line-height:27px;color:#2a2a2a">2.65</div><div class="c" style="left:647px;top:501px;width:68px;height:27px;line-height:27px;color:#2a2a2a">3.39</div><div class="c" style="left:716px;top:501px;width:54px;height:27px;line-height:27px;color:#2a2a2a">2.45</div><div class="c" style="left:770px;top:501px;width:38px;height:27px;line-height:27px;color:#0000ff;-webkit-text-stroke:0.08px">平</div><div class="c" style="left:809px;top:501px;width:39px;height:27px;line-height:27px;color:#0000ff;-webkit-text-stroke:0.08px">走</div><div class="c" style="left:849px;top:501px;width:57px;height:27px;line-height:27px;color:#ff0000;-webkit-text-stroke:0.08px">大</div><div class="c" style="left:-2px;top:529px;width:73px;height:27px;line-height:27px;color:#fff">韩K联</div><div class="c" style="left:73px;top:529px;width:76px;height:27px;line-height:27px;color:#2a2a2a">25-08-16</div><div class="c" style="left:149px;top:529px;width:73px;height:27px;line-height:27px;color:#000">全北现代</div><div class="c" style="left:224px;top:529px;width:88px;height:27px;line-height:27px;color:#2a2a2a"><span style="color:#ff0000">3-0</span><span class="p">(</span>1-0<span class="p">)</span></div><div class="c" style="left:313px;top:529px;width:39px;height:27px;line-height:27px;color:#2a2a2a">3-3</div><div class="c" style="left:352px;top:529px;width:73px;height:27px;line-height:27px;color:#008000;-webkit-text-stroke:0.08px">大邱</div><div class="c" style="left:427px;top:529px;width:41px;height:27px;line-height:27px;color:#2a2a2a">1.04</div><div class="c" style="left:468px;top:529px;width:67px;height:27px;line-height:27px;color:#000">一<span class="sl">/</span>球半</div><div class="c" style="left:537px;top:529px;width:42px;height:27px;line-height:27px;color:#2a2a2a">0.85</div><div class="c" style="left:580px;top:529px;width:66px;height:27px;line-height:27px;color:#2a2a2a">1.40</div><div class="c" style="left:647px;top:529px;width:68px;height:27px;line-height:27px;color:#2a2a2a">4.72</div><div class="c" style="left:716px;top:529px;width:54px;height:27px;line-height:27px;color:#2a2a2a">6.29</div><div class="c" style="left:770px;top:529px;width:38px;height:27px;line-height:27px;color:#008000;-webkit-text-stroke:0.08px">負</div><div class="c" style="left:809px;top:529px;width:39px;height:27px;line-height:27px;color:#008000;-webkit-text-stroke:0.08px">輸</div><div class="c" style="left:849px;top:529px;width:57px;height:27px;line-height:27px;color:#008000;-webkit-text-stroke:0.08px">小</div><div class="c" style="left:-2px;top:557px;width:73px;height:27px;line-height:27px;color:#fff">韩K联</div><div class="c" style="left:73px;top:557px;width:76px;height:27px;line-height:27px;color:#2a2a2a">25-08-08</div><div class="c" style="left:149px;top:557px;width:73px;height:27px;line-height:27px;color:#000">首尔</div><div class="c" style="left:224px;top:557px;width:88px;height:27px;line-height:27px;color:#2a2a2a"><span style="color:#ff0000">2-2</span><span class="p">(</span>2-1<span class="p">)</span></div><div class="c" style="left:313px;top:557px;width:39px;height:27px;line-height:27px;color:#2a2a2a">4-4</div><div class="c" style="left:352px;top:557px;width:73px;height:27px;line-height:27px;color:#008000;-webkit-text-stroke:0.08px">大邱</div><div class="c" style="left:427px;top:557px;width:41px;height:27px;line-height:27px;color:#2a2a2a">0.95</div><div class="c" style="left:468px;top:557px;width:67px;height:27px;line-height:27px;color:#000">球半</div><div class="c" style="left:537px;top:557px;width:42px;height:27px;line-height:27px;color:#2a2a2a">0.94</div><div class="c" style="left:580px;top:557px;width:66px;height:27px;line-height:27px;color:#2a2a2a">1.36</div><div class="c" style="left:647px;top:557px;width:68px;height:27px;line-height:27px;color:#2a2a2a">4.80</div><div class="c" style="left:716px;top:557px;width:54px;height:27px;line-height:27px;color:#2a2a2a">7.28</div><div class="c" style="left:770px;top:557px;width:38px;height:27px;line-height:27px;color:#0000ff;-webkit-text-stroke:0.08px">平</div><div class="c" style="left:809px;top:557px;width:39px;height:27px;line-height:27px;color:#ff0000;-webkit-text-stroke:0.08px">贏</div><div class="c" style="left:849px;top:557px;width:57px;height:27px;line-height:27px;color:#ff0000;-webkit-text-stroke:0.08px">大</div><div class="c" style="left:-2px;top:585px;width:73px;height:27px;line-height:27px;color:#fff">球会友谊</div><div class="c" style="left:73px;top:585px;width:76px;height:27px;line-height:27px;color:#2a2a2a">25-08-04</div><div class="c" style="left:149px;top:585px;width:73px;height:27px;line-height:27px;color:#008000;-webkit-text-stroke:0.08px">大邱</div><div class="c" style="left:224px;top:585px;width:88px;height:27px;line-height:27px;color:#2a2a2a"><span style="color:#ff0000">0-5</span><span class="p">(</span>0-3<span class="p">)</span></div><div class="c" style="left:313px;top:585px;width:39px;height:27px;line-height:27px;color:#2a2a2a">0-8</div><div class="c" style="left:352px;top:585px;width:73px;height:27px;line-height:27px;color:#000">巴塞罗那</div><div class="c" style="left:427px;top:585px;width:41px;height:27px;line-height:27px;color:#2a2a2a">0.90</div><div class="c" style="left:468px;top:585px;width:67px;height:27px;line-height:27px;color:#000"><span style="color:#ff0000">*</span>四球</div><div class="c" style="left:537px;top:585px;width:42px;height:27px;line-height:27px;color:#2a2a2a">0.92</div><div class="c" style="left:580px;top:585px;width:66px;height:27px;line-height:27px;color:#2a2a2a">26.87</div><div class="c" style="left:647px;top:585px;width:68px;height:27px;line-height:27px;color:#2a2a2a">16.17</div><div class="c" style="left:716px;top:585px;width:54px;height:27px;line-height:27px;color:#2a2a2a">1.04</div><div class="c" style="left:770px;top:585px;width:38px;height:27px;line-height:27px;color:#008000;-webkit-text-stroke:0.08px">負</div><div class="c" style="left:809px;top:585px;width:39px;height:27px;line-height:27px;color:#008000;-webkit-text-stroke:0.08px">輸</div><div class="c" style="left:849px;top:585px;width:57px;height:27px;line-height:27px;color:#008000;-webkit-text-stroke:0.08px">小</div><div class="c" style="left:-2px;top:613px;width:73px;height:27px;line-height:27px;color:#fff">韩K联</div><div class="c" style="left:73px;top:613px;width:76px;height:27px;line-height:27px;color:#2a2a2a">25-07-27</div><div class="c" style="left:149px;top:613px;width:73px;height:27px;line-height:27px;color:#008000;-webkit-text-stroke:0.08px">大邱</div><div class="c" style="left:224px;top:613px;width:88px;height:27px;line-height:27px;color:#2a2a2a"><span style="color:#ff0000">0-1</span><span class="p">(</span>0-0<span class="p">)</span></div><div class="c" style="left:313px;top:613px;width:39px;height:27px;line-height:27px;color:#2a2a2a">3-3</div><div class="c" style="left:352px;top:613px;width:73px;height:27px;line-height:27px;color:#000">浦项制铁</div><div class="c" style="left:427px;top:613px;width:41px;height:27px;line-height:27px;color:#2a2a2a">0.93</div><div class="c" style="left:468px;top:613px;width:67px;height:27px;line-height:27px;color:#000"><span style="color:#ff0000">*</span>半球</div><div class="c" style="left:537px;top:613px;width:42px;height:27px;line-height:27px;color:#2a2a2a">0.96</div><div class="c" style="left:580px;top:613px;width:66px;height:27px;line-height:27px;color:#2a2a2a">3.63</div><div class="c" style="left:647px;top:613px;width:68px;height:27px;line-height:27px;color:#2a2a2a">3.51</div><div class="c" style="left:716px;top:613px;width:54px;height:27px;line-height:27px;color:#2a2a2a">1.91</div><div class="c" style="left:770px;top:613px;width:38px;height:27px;line-height:27px;color:#008000;-webkit-text-stroke:0.08px">負</div><div class="c" style="left:809px;top:613px;width:39px;height:27px;line-height:27px;color:#008000;-webkit-text-stroke:0.08px">輸</div><div class="c" style="left:849px;top:613px;width:57px;height:27px;line-height:27px;color:#008000;-webkit-text-stroke:0.08px">小</div><div class="c" style="left:-2px;top:641px;width:73px;height:27px;line-height:27px;color:#fff">韩K联</div><div class="c" style="left:73px;top:641px;width:76px;height:27px;line-height:27px;color:#2a2a2a">25-07-22</div><div class="c" style="left:149px;top:641px;width:73px;height:27px;line-height:27px;color:#000">安阳</div><div class="c" style="left:224px;top:641px;width:88px;height:27px;line-height:27px;color:#2a2a2a"><span style="color:#ff0000">4-0</span><span class="p">(</span>2-0<span class="p">)</span></div><div class="c" style="left:313px;top:641px;width:39px;height:27px;line-height:27px;color:#2a2a2a">5-3</div><div class="c" style="left:353px;top:641px;width:73px;height:27px;line-height:27px;color:#008000;-webkit-text-stroke:0.08px">大邱<b class="bd">1</b></div><div class="c" style="left:427px;top:641px;width:41px;height:27px;line-height:27px;color:#2a2a2a">0.89</div><div class="c" style="left:468px;top:641px;width:67px;height:27px;line-height:27px;color:#000">平<span class="sl">/</span>半</div><div class="c" style="left:537px;top:641px;width:42px;height:27px;line-height:27px;color:#2a2a2a">1.00</div><div class="c" style="left:580px;top:641px;width:66px;height:27px;line-height:27px;color:#2a2a2a">2.11</div><div class="c" style="left:647px;top:641px;width:68px;height:27px;line-height:27px;color:#2a2a2a">3.36</div><div class="c" style="left:716px;top:641px;width:54px;height:27px;line-height:27px;color:#2a2a2a">3.20</div><div class="c" style="left:770px;top:641px;width:38px;height:27px;line-height:27px;color:#008000;-webkit-text-stroke:0.08px">負</div><div class="c" style="left:809px;top:641px;width:39px;height:27px;line-height:27px;color:#008000;-webkit-text-stroke:0.08px">輸</div><div class="c" style="left:849px;top:641px;width:57px;height:27px;line-height:27px;color:#ff0000;-webkit-text-stroke:0.08px">大</div><div class="c" style="left:-2px;top:669px;width:73px;height:27px;line-height:27px;color:#fff">韩K联</div><div class="c" style="left:73px;top:669px;width:76px;height:27px;line-height:27px;color:#2a2a2a">25-07-18</div><div class="c" style="left:149px;top:669px;width:73px;height:27px;line-height:27px;color:#008000;-webkit-text-stroke:0.08px">大邱</div><div class="c" style="left:224px;top:669px;width:88px;height:27px;line-height:27px;color:#2a2a2a"><span style="color:#ff0000">2-3</span><span class="p">(</span>2-1<span class="p">)</span></div><div class="c" style="left:313px;top:669px;width:39px;height:27px;line-height:27px;color:#2a2a2a">5-7</div><div class="c" style="left:352px;top:669px;width:73px;height:27px;line-height:27px;color:#000">金泉尚武</div><div class="c" style="left:427px;top:669px;width:41px;height:27px;line-height:27px;color:#2a2a2a">1.00</div><div class="c" style="left:468px;top:669px;width:67px;height:27px;line-height:27px;color:#000"><span style="color:#ff0000">*</span>半球</div><div class="c" style="left:537px;top:669px;width:42px;height:27px;line-height:27px;color:#2a2a2a">0.89</div><div class="c" style="left:580px;top:669px;width:66px;height:27px;line-height:27px;color:#2a2a2a">3.65</div><div class="c" style="left:647px;top:669px;width:68px;height:27px;line-height:27px;color:#2a2a2a">3.63</div><div class="c" style="left:716px;top:669px;width:54px;height:27px;line-height:27px;color:#2a2a2a">1.86</div><div class="c" style="left:770px;top:669px;width:38px;height:27px;line-height:27px;color:#008000;-webkit-text-stroke:0.08px">負</div><div class="c" style="left:809px;top:669px;width:39px;height:27px;line-height:27px;color:#008000;-webkit-text-stroke:0.08px">輸</div><div class="c" style="left:849px;top:669px;width:57px;height:27px;line-height:27px;color:#ff0000;-webkit-text-stroke:0.08px">大</div><div class="c" style="left:-2px;top:697px;width:73px;height:27px;line-height:27px;color:#fff">韩K联</div><div class="c" style="left:73px;top:697px;width:76px;height:27px;line-height:27px;color:#2a2a2a">25-07-12</div><div class="c" style="left:149px;top:697px;width:73px;height:27px;line-height:27px;color:#000">蔚山</div><div class="c" style="left:224px;top:697px;width:88px;height:27px;line-height:27px;color:#2a2a2a"><span style="color:#ff0000">2-2</span><span class="p">(</span>0-1<span class="p">)</span></div><div class="c" style="left:313px;top:697px;width:39px;height:27px;line-height:27px;color:#2a2a2a">10-1</div><div class="c" style="left:352px;top:697px;width:73px;height:27px;line-height:27px;color:#008000;-webkit-text-stroke:0.08px">大邱</div><div class="c" style="left:427px;top:697px;width:41px;height:27px;line-height:27px;color:#2a2a2a">0.92</div><div class="c" style="left:468px;top:697px;width:67px;height:27px;line-height:27px;color:#000">一球</div><div class="c" style="left:537px;top:697px;width:42px;height:27px;line-height:27px;color:#2a2a2a">0.97</div><div class="c" style="left:580px;top:697px;width:66px;height:27px;line-height:27px;color:#2a2a2a">1.49</div><div class="c" style="left:647px;top:697px;width:68px;height:27px;line-height:27px;color:#2a2a2a">4.28</div><div class="c" style="left:716px;top:697px;width:54px;height:27px;line-height:27px;color:#2a2a2a">5.57</div><div class="c" style="left:770px;top:697px;width:38px;height:27px;line-height:27px;color:#0000ff;-webkit-text-stroke:0.08px">平</div><div class="c" style="left:809px;top:697px;width:39px;height:27px;line-height:27px;color:#ff0000;-webkit-text-stroke:0.08px">贏</div><div class="c" style="left:849px;top:697px;width:57px;height:27px;line-height:27px;color:#ff0000;-webkit-text-stroke:0.08px">大</div><div class="c" style="left:-2px;top:725px;width:73px;height:27px;line-height:27px;color:#fff">韩国杯</div><div class="c" style="left:73px;top:725px;width:76px;height:27px;line-height:27px;color:#2a2a2a">25-07-02</div><div class="c" style="left:149px;top:725px;width:73px;height:27px;line-height:27px;color:#008000;-webkit-text-stroke:0.08px">大邱</div><div class="c" style="left:224px;top:725px;width:88px;height:27px;line-height:27px;color:#2a2a2a"><span style="color:#ff0000">1-2</span><span class="p">(</span>0-1<span class="p">)</span></div><div class="c" style="left:313px;top:725px;width:39px;height:27px;line-height:27px;color:#2a2a2a">3-3</div><div class="c" style="left:352px;top:725px;width:73px;height:27px;line-height:27px;color:#000">江原</div><div class="c" style="left:427px;top:725px;width:41px;height:27px;line-height:27px;color:#2a2a2a">1.03</div><div class="c" style="left:468px;top:725px;width:67px;height:27px;line-height:27px;color:#000">平<span class="sl">/</span>半</div><div class="c" style="left:537px;top:725px;width:42px;height:27px;line-height:27px;color:#2a2a2a">0.85</div><div class="c" style="left:580px;top:725px;width:66px;height:27px;line-height:27px;color:#2a2a2a">2.51</div><div class="c" style="left:647px;top:725px;width:68px;height:27px;line-height:27px;color:#2a2a2a">3.20</div><div class="c" style="left:716px;top:725px;width:54px;height:27px;line-height:27px;color:#2a2a2a">2.66</div><div class="c" style="left:770px;top:725px;width:38px;height:27px;line-height:27px;color:#008000;-webkit-text-stroke:0.08px">負</div><div class="c" style="left:809px;top:725px;width:39px;height:27px;line-height:27px;color:#008000;-webkit-text-stroke:0.08px">輸</div><div class="c" style="left:849px;top:725px;width:57px;height:27px;line-height:27px;color:#ff0000;-webkit-text-stroke:0.08px">大</div><div style="left:0px;top:752px;width:908px;height:1px;background:#fff"></div></body></html>
